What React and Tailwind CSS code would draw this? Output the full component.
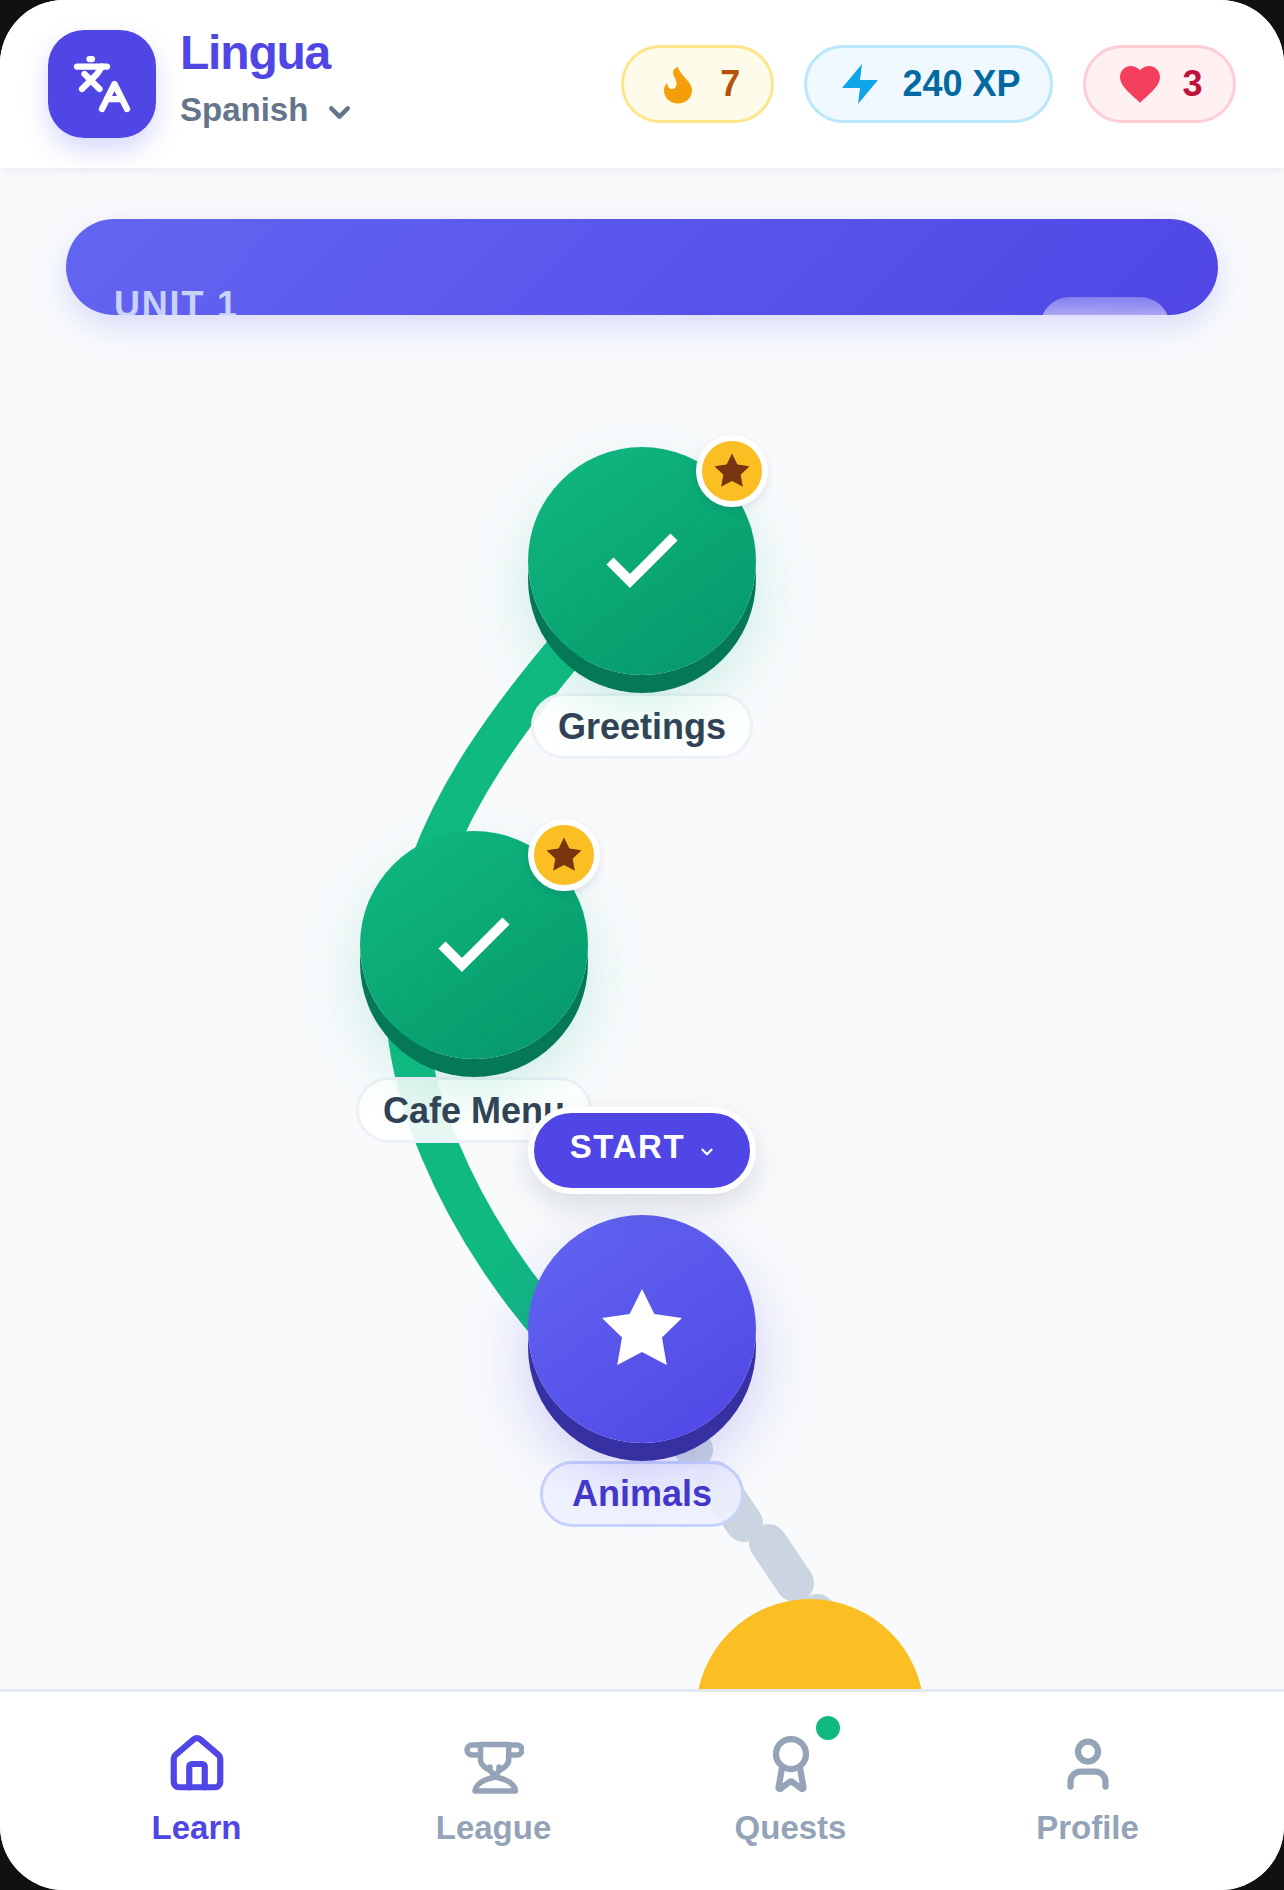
import { House, Award, User, Languages, ChevronDown } from 'lucide-react'

const font = "[font-family:'Liberation_Sans',Arial,sans-serif]"

function Flame() {
  return (
    <svg width="48" height="48" viewBox="-6 -4 48 48" className="fill-[#f59e0b]">
      <path d="M18 2.5C19 8 23 11 27 16C30.5 20 32 23 32 26C32 34 26 39.5 18 39.5C10 39.5 4 34 4 26C4 23.5 5 21 7 19C7.5 22.5 9 25 12 25C15.5 25 17 21.5 16.5 18C16 14.5 13 12 13 8C13 6 15.5 4 18 2.5Z" />
    </svg>
  )
}

function Bolt() {
  return (
    <svg width="48" height="48" viewBox="0 0 24 24" className="fill-[#0ea5e9]">
      <path d="M13 2 3 14h9l-1 8 10-12h-9l1-8z" />
    </svg>
  )
}

function Heart() {
  return (
    <svg width="48" height="48" viewBox="0 0 24 24" className="fill-[#f43f5e]">
      <path d="M12 21.35l-1.45-1.32C5.4 15.36 2 12.28 2 8.5 2 5.42 4.42 3 7.5 3c1.74 0 3.41.81 4.5 2.09C13.09 3.81 14.76 3 16.5 3 19.58 3 22 5.42 22 8.5c0 3.78-3.4 6.86-8.55 11.54L12 21.35z" />
    </svg>
  )
}

function Star({ className }) {
  return (
    <svg viewBox="0 0 24 24" className={className}>
      <path d="M12 2l3.09 6.26L22 9.27l-5 4.87 1.18 6.88L12 17.77l-6.18 3.25L7 14.14 2 9.27l6.91-1.01L12 2z" />
    </svg>
  )
}

function Check() {
  return (
    <svg width="96" height="96" viewBox="0 0 24 24" fill="none" stroke="#fff" strokeWidth="2.5">
      <path d="M20 6 9 17l-5-5" />
    </svg>
  )
}

function Trophy() {
  return (
    <svg width="60" height="60" viewBox="0 0 60 60" fill="none" stroke="currentColor" strokeWidth="5.5" strokeLinecap="round" strokeLinejoin="round">
      <path d="M15 11H8a5 5 0 0 0 0 10H16" />
      <path d="M46 11H53a5 5 0 0 1 0 10H45" />
      <path d="M16.5 10.5H44.7V26c0 5-5 8-10 11M16.5 10.5V26c0 5 5 8 10 11" />
      <path d="M26 36V33M35 36V33M26.5 37L31 42M35 37L31 42" />
      <path d="M11 57c1-8 10-12 20.5-14c10 2 19 6 20 14z" />
    </svg>
  )
}

function Stat({ icon, text, className }) {
  return (
    <div className={`flex h-[78px] items-center gap-[18px] rounded-full border-[3px] text-[36px] font-bold ${className}`}>
      {icon}
      <span>{text}</span>
    </div>
  )
}

function Badge() {
  return (
    <div className="absolute -right-[12px] -top-[12px] flex h-[72px] w-[72px] items-center justify-center rounded-full border-[6px] border-white bg-[#fbbf24] shadow-[0_3px_9px_rgba(15,23,42,0.1)]">
      <Star className="h-[42px] w-[42px] fill-[#78350f]" />
    </div>
  )
}

function Label({ children, className }) {
  return (
    <div className={`flex h-[66px] items-center whitespace-nowrap rounded-full border-[3px] text-[36px] font-bold ${className}`}>
      {children}
    </div>
  )
}

function Trail() {
  return (
    <svg className="absolute inset-0 h-full w-full" viewBox="0 168 1284 1521" fill="none" strokeWidth="40">
      <path stroke="#10b981" d="M642 561C555 665 430 790 410 945C385 1060 455 1235 590 1370" />
      <path stroke="#cbd5e1" strokeWidth="38" strokeLinecap="round" d="M664 1406L694 1450M715 1480L744 1523M768 1543L795 1583M817 1613L835 1650" />
    </svg>
  )
}

function NavItem({ icon, label, active, dot }) {
  return (
    <div className={`flex flex-col items-center ${active ? 'text-[#4f46e5]' : 'text-[#94a3b8]'}`}>
      <div className="relative h-[60px] w-[60px]">
        {icon}
        {dot && <span className="absolute -right-[19px] -top-[18px] h-[24px] w-[24px] rounded-full bg-[#10b981]" />}
      </div>
      <span className="mt-[15px] text-[33px] font-bold leading-[38px]">{label}</span>
    </div>
  )
}

export default function App() {
  return (
    <div className={`h-[1890px] w-[1284px] bg-[#111111] ${font}`}>
      <div className="flex h-full flex-col overflow-hidden rounded-[64px] bg-[#f8fafc]">
        <header className="relative z-10 flex h-[168px] shrink-0 items-center justify-between bg-white px-[48px] shadow-[0_3px_8px_rgba(15,23,42,0.06)]">
          <div className="flex items-center gap-[24px]">
            <div className="flex h-[108px] w-[108px] items-center justify-center rounded-[36px] bg-[#4f46e5] shadow-[0_12px_24px_rgba(99,102,241,0.25)]">
              <Languages size={60} strokeWidth={2.5} className="text-white" />
            </div>
            <div className="-mt-[13px]">
              <div className="text-[48px] font-bold leading-[56px] tracking-[-1.2px] text-[#4f46e5]">Lingua</div>
              <div className="mt-[9px] flex items-center gap-[15px] text-[33px] font-bold leading-[40px] text-[#64748b]">
                Spanish
                <ChevronDown size={33} strokeWidth={3.2} className="mt-[4px]" />
              </div>
            </div>
          </div>
          <div className="flex items-center gap-[30px]">
            <Stat icon={<Flame />} text="7" className="border-[#fde68a] bg-[#fffbeb] px-[30.5px] text-[#b45309]" />
            <Stat icon={<Bolt />} text="240 XP" className="border-[#bae6fd] bg-[#f0f9ff] px-[29.5px] text-[#0369a1]" />
            <Stat icon={<Heart />} text="3" className="border-[#fecdd3] bg-[#fff1f2] px-[30.5px] text-[#be123c]" />
          </div>
        </header>

        <main className="relative flex-1 overflow-hidden">
          <Trail />
          <div className="relative mx-[66px] mt-[51px] h-[96px] rounded-[48px] bg-[linear-gradient(135deg,#6366f1,#4f46e5)] shadow-[0_12px_30px_rgba(99,102,241,0.2)]">
            <div className="flex h-full items-start justify-between overflow-hidden rounded-[48px] px-[48px]">
              <span className="mt-[66px] text-[36px] font-bold leading-[40px] tracking-[1.8px] text-[#c7d2fe]">UNIT 1</span>
              <span className="mt-[78px] h-[60px] w-[130px] rounded-full bg-gradient-to-b from-white/30 to-white" />
            </div>
          </div>

          <div className="absolute left-[414px] top-[279px] flex w-[456px] flex-col items-center">
            <div className="relative h-[228px] w-[228px] rounded-full bg-[linear-gradient(145deg,#10b981,#059669)] shadow-[0_18px_0_#047857,0_30px_60px_rgba(16,185,129,0.2)]">
              <div className="flex h-full items-center justify-center"><Check /></div>
              <Badge />
            </div>
            <Label className="mt-[18px] border-[#eef1f7] bg-white/90 px-[24px] pt-[2px] text-[#334155]">Greetings</Label>
          </div>

          <div className="absolute left-[246px] top-[663px] flex w-[456px] flex-col items-center">
            <div className="relative h-[228px] w-[228px] rounded-full bg-[linear-gradient(145deg,#10b981,#059669)] shadow-[0_18px_0_#047857,0_30px_60px_rgba(16,185,129,0.2)]">
              <div className="flex h-full items-center justify-center"><Check /></div>
              <Badge />
            </div>
            <Label className="mt-[18px] border-[#eef1f7] bg-white/90 px-[24px] pt-[2px] text-[#334155]">Cafe Menu</Label>
          </div>

          <div className="absolute left-[414px] top-[1047px] flex w-[456px] flex-col items-center">
            <div className="absolute left-1/2 -top-[108px] z-10 flex h-[87px] w-[228px] -translate-x-1/2 items-center justify-center gap-[13px] rounded-full border-[6px] border-white bg-[#4f46e5] pl-[2px] text-[33px] font-bold tracking-[1.6px] text-white shadow-[0_12px_30px_rgba(15,23,42,0.12)]">
              <span className="-mt-[7px]">START</span>
              <ChevronDown size={18} strokeWidth={3} className="mt-[2px]" />
            </div>
            <div className="relative flex h-[228px] w-[228px] items-center justify-center rounded-full bg-[linear-gradient(145deg,#6366f1,#4f46e5)] shadow-[0_18px_0_#3730a3,0_30px_60px_rgba(79,70,229,0.25)]">
              <Star className="h-[96px] w-[96px] fill-white" />
            </div>
            <Label className="mt-[18px] border-[#c7d2fe] bg-[#eef2ff]/90 px-[29px] text-[#4338ca]">Animals</Label>
          </div>

          <div className="absolute left-[696px] top-[1431px] h-[228px] w-[228px] rounded-full bg-[#fbbf24]" />
        </main>

        <nav className="grid h-[201px] shrink-0 grid-cols-4 border-t-[3px] border-[#e2e8f0] bg-white px-[48px] pt-[42px]">
          <NavItem active icon={<House size={62} strokeWidth={2.4} className="-m-[1px]" />} label="Learn" />
          <NavItem icon={<Trophy />} label="League" />
          <NavItem dot icon={<Award size={60} strokeWidth={2.5} />} label="Quests" />
          <NavItem icon={<User size={60} strokeWidth={2.5} />} label="Profile" />
        </nav>
      </div>
    </div>
  )
}
